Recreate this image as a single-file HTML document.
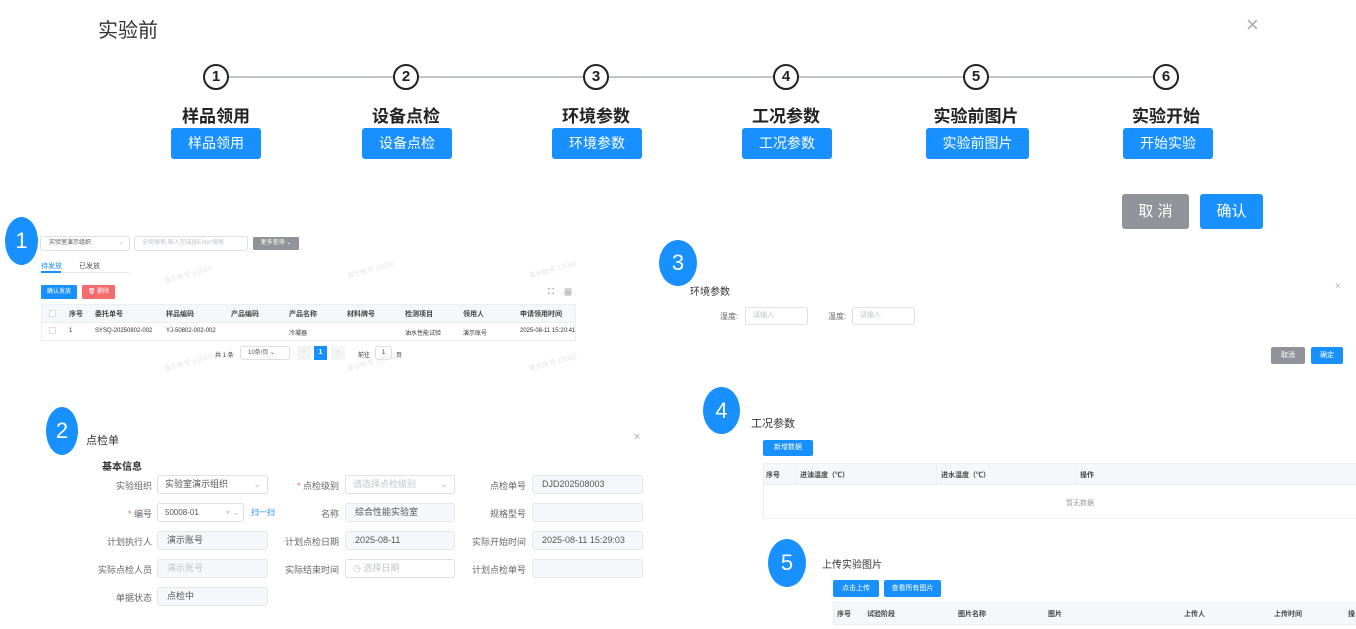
<!DOCTYPE html>
<html><head><meta charset="utf-8"><style>
*{margin:0;padding:0;box-sizing:border-box}
body{width:1356px;height:629px;position:relative;background:#fff;overflow:hidden;font-family:"Liberation Sans","Noto Sans CJK SC",sans-serif;color:#333}
.a{position:absolute;white-space:nowrap}
.st{width:26px;height:26px;border:2px solid #222;border-radius:50%;background:#fff;text-align:center;line-height:22px;font-size:15px;font-weight:bold;color:#222}
.lb{font-size:17px;font-weight:bold;color:#222;text-align:center;width:140px}
.bb{background:#1890ff;color:#fff;border-radius:3px;text-align:center;font-size:14px;height:31px;line-height:31px}
.num{background:#1890ff;color:#fff;border-radius:50%;width:34px;height:48px;text-align:center;line-height:48px;font-size:22px}
.in{border:1px solid #dcdfe6;border-radius:3px;background:#fff;font-size:9px;color:#c0c4cc;padding-left:7px;height:18px;line-height:16px}
.dis{background:#f5f7fa;border:1px solid #e4e7ed;border-radius:3px;height:19px;font-size:9px;line-height:17px;padding-left:9px;color:#555}
.fl{font-size:9px;color:#666;text-align:right}
.t{font-size:6px;color:#333}
.th{font-size:7px;font-weight:bold;color:#444}
.wm{font-size:7px;color:#e6e6e6;transform:rotate(-15deg)}
</style></head><body>
<div class="a" style="left:98px;top:14px;font-size:20px;color:#333">实验前</div>
<div class="a" style="left:1246px;top:12px;font-size:22px;color:#aaa;font-weight:300">×</div>
<div class="a" style="left:216px;top:76px;width:950px;height:2px;background:#c0c4cc"></div>
<div class="a st" style="left:203px;top:64px">1</div>
<div class="a st" style="left:393px;top:64px">2</div>
<div class="a st" style="left:583px;top:64px">3</div>
<div class="a st" style="left:773px;top:64px">4</div>
<div class="a st" style="left:963px;top:64px">5</div>
<div class="a st" style="left:1153px;top:64px">6</div>
<div class="a lb" style="left:146px;top:102px">样品领用</div>
<div class="a lb" style="left:336px;top:102px">设备点检</div>
<div class="a lb" style="left:526px;top:102px">环境参数</div>
<div class="a lb" style="left:716px;top:102px">工况参数</div>
<div class="a lb" style="left:906px;top:102px">实验前图片</div>
<div class="a lb" style="left:1096px;top:102px">实验开始</div>
<div class="a bb" style="left:171px;top:128px;width:90px">样品领用</div>
<div class="a bb" style="left:362px;top:128px;width:90px">设备点检</div>
<div class="a bb" style="left:552px;top:128px;width:90px">环境参数</div>
<div class="a bb" style="left:742px;top:128px;width:90px">工况参数</div>
<div class="a bb" style="left:926px;top:128px;width:103px">实验前图片</div>
<div class="a bb" style="left:1123px;top:128px;width:90px">开始实验</div>
<div class="a bb" style="left:1122px;top:194px;width:67px;height:35px;line-height:35px;background:#909399;font-size:15px">取 消</div>
<div class="a bb" style="left:1200px;top:194px;width:63px;height:35px;line-height:35px;font-size:15px">确认</div>

<!-- section 1 -->
<div class="a in" style="left:40px;top:236px;width:90px;height:15px;line-height:13px;font-size:6px;color:#555;padding-left:8px">实验室演示组织<span style="float:right;margin-right:5px;color:#bbb">⌄</span></div>
<div class="a in" style="left:134px;top:236px;width:114px;height:15px;line-height:13px;font-size:6px">全局搜索,输入完成按Enter搜索</div>
<div class="a" style="left:253px;top:237px;width:46px;height:13px;background:#909399;color:#fff;font-size:6px;line-height:13px;text-align:center;border-radius:1px">更多查询 ⌄</div>
<div class="num a" style="left:5px;top:217px;width:33px">1</div>
<div class="a" style="left:41px;top:261px;font-size:7px;color:#1890ff">待发放</div>
<div class="a" style="left:79px;top:261px;font-size:7px;color:#555">已发放</div>
<div class="a" style="left:41px;top:272px;width:88px;height:1px;background:#e4e7ed"></div>
<div class="a" style="left:41px;top:271px;width:20px;height:2px;background:#1890ff"></div>
<div class="a" style="left:41px;top:285px;width:36px;height:14px;background:#1890ff;color:#fff;font-size:6px;line-height:14px;text-align:center;border-radius:1px">确认发放</div>
<div class="a" style="left:82px;top:285px;width:33px;height:14px;background:#f56c6c;color:#fff;font-size:6px;line-height:14px;text-align:center;border-radius:1px">🗑 删除</div>
<div class="a" style="left:548px;top:287px;font-size:8px;color:#555">⛶</div>
<div class="a" style="left:564px;top:287px;font-size:8px;color:#555">▦</div>
<div class="a" style="left:41px;top:304px;width:535px;height:37px;border:1px solid #ebeef5"></div>
<div class="a" style="left:42px;top:305px;width:533px;height:17px;background:#f5f7fa"></div>
<div class="a" style="left:41px;top:322px;width:535px;height:1px;background:#ebeef5"></div>
<div class="a th" style="left:69px;top:309px">序号</div><div class="a th" style="left:95px;top:309px">委托单号</div><div class="a th" style="left:166px;top:309px">样品编码</div><div class="a th" style="left:231px;top:309px">产品编码</div><div class="a th" style="left:289px;top:309px">产品名称</div><div class="a th" style="left:347px;top:309px">材料牌号</div><div class="a th" style="left:405px;top:309px">检测项目</div><div class="a th" style="left:463px;top:309px">领用人</div><div class="a th" style="left:520px;top:309px">申请领用时间</div>
<div class="a t" style="left:69px;top:328px">1</div><div class="a t" style="left:95px;top:328px">SYSQ-20250802-002</div><div class="a t" style="left:166px;top:328px">YJ-50802-002-002</div><div class="a t" style="left:289px;top:328px">冷凝器</div><div class="a t" style="left:405px;top:328px">油水性能试验</div><div class="a t" style="left:463px;top:328px">演示账号</div><div class="a t" style="left:520px;top:328px">2025-08-11 15:20:41</div>
<div class="a" style="left:49px;top:327px;width:7px;height:7px;border:1px solid #ddd"></div>
<div class="a" style="left:49px;top:310px;width:7px;height:7px;border:1px solid #ddd;background:#fff"></div>
<div class="a t" style="left:215px;top:350px">共 1 条</div>
<div class="a in" style="left:240px;top:346px;width:50px;height:14px;font-size:6px;line-height:12px;color:#555">10条/页 ⌄</div>
<div class="a" style="left:297px;top:346px;width:14px;height:14px;background:#f4f4f5;color:#bbb;font-size:7px;text-align:center;line-height:14px">‹</div>
<div class="a" style="left:314px;top:346px;width:13px;height:14px;background:#1890ff;color:#fff;font-size:7px;text-align:center;line-height:14px;font-weight:bold">1</div>
<div class="a" style="left:331px;top:346px;width:14px;height:14px;background:#f4f4f5;color:#bbb;font-size:7px;text-align:center;line-height:14px">›</div>
<div class="a t" style="left:358px;top:350px">前往</div>
<div class="a in" style="left:375px;top:346px;width:17px;height:14px;font-size:6px;color:#333;line-height:12px;padding-left:6px">1</div>
<div class="a t" style="left:396px;top:350px">页</div>
<div class="a wm" style="left:163px;top:270px">演示账号 12090</div><div class="a wm" style="left:346px;top:265px">演示账号 12090</div><div class="a wm" style="left:528px;top:265px">演示账号 12090</div>
<div class="a wm" style="left:163px;top:358px">演示账号 12090</div><div class="a wm" style="left:346px;top:358px">演示账号 12090</div><div class="a wm" style="left:528px;top:358px">演示账号 12090</div>

<!-- section 2 -->
<div class="num a" style="left:46px;top:407px;width:32px">2</div>
<div class="a" style="left:86px;top:432px;font-size:11px;color:#333">点检单</div>
<div class="a" style="left:634px;top:431px;font-size:11px;color:#aaa">×</div>
<div class="a" style="left:102px;top:458px;font-size:10px;font-weight:bold;color:#333">基本信息</div>
<div class="a fl" style="left:90px;top:479px;width:62px">实验组织</div>
<div class="a in" style="left:157px;top:475px;width:111px;height:19px;color:#555;line-height:17px">实验室演示组织<span style="float:right;margin-right:6px;color:#bbb">⌄</span></div>
<div class="a fl" style="left:90px;top:507px;width:62px"><span style="color:#f56c6c">*</span> 编号</div>
<div class="a in" style="left:157px;top:503px;width:87px;height:19px;color:#555;line-height:17px;font-size:8px">50008-01<span style="float:right;margin-right:4px;color:#bbb">× ⌄</span></div>
<div class="a" style="left:251px;top:507px;font-size:8px;color:#1890ff">扫一扫</div>
<div class="a fl" style="left:90px;top:535px;width:62px">计划执行人</div>
<div class="a dis" style="left:157px;top:531px;width:111px">演示账号</div>
<div class="a fl" style="left:90px;top:563px;width:62px">实际点检人员</div>
<div class="a dis" style="left:157px;top:559px;width:111px;color:#c0c4cc">演示账号</div>
<div class="a fl" style="left:90px;top:591px;width:62px">单据状态</div>
<div class="a dis" style="left:157px;top:587px;width:111px">点检中</div>
<div class="a fl" style="left:270px;top:479px;width:69px"><span style="color:#f56c6c">*</span> 点检级别</div>
<div class="a in" style="left:345px;top:475px;width:110px;height:19px;line-height:17px">请选择点检级别<span style="float:right;margin-right:6px;color:#bbb">⌄</span></div>
<div class="a fl" style="left:270px;top:507px;width:69px">名称</div>
<div class="a dis" style="left:345px;top:503px;width:110px">综合性能实验室</div>
<div class="a fl" style="left:270px;top:535px;width:69px">计划点检日期</div>
<div class="a dis" style="left:345px;top:531px;width:110px">2025-08-11</div>
<div class="a fl" style="left:270px;top:563px;width:69px">实际结束时间</div>
<div class="a in" style="left:345px;top:559px;width:110px;height:19px;line-height:17px">◷ 选择日期</div>
<div class="a fl" style="left:460px;top:479px;width:66px">点检单号</div>
<div class="a dis" style="left:532px;top:475px;width:111px">DJD202508003</div>
<div class="a fl" style="left:460px;top:507px;width:66px">规格型号</div>
<div class="a dis" style="left:532px;top:503px;width:111px"></div>
<div class="a fl" style="left:460px;top:535px;width:66px">实际开始时间</div>
<div class="a dis" style="left:532px;top:531px;width:111px">2025-08-11 15:29:03</div>
<div class="a fl" style="left:460px;top:563px;width:66px">计划点检单号</div>
<div class="a dis" style="left:532px;top:559px;width:111px"></div>

<!-- section 3 -->
<div class="num a" style="left:659px;top:240px;width:38px;height:46px;line-height:46px">3</div>
<div class="a" style="left:690px;top:283px;font-size:10px;color:#333">环境参数</div>
<div class="a" style="left:1335px;top:281px;font-size:10px;color:#aaa">×</div>
<div class="a" style="left:720px;top:311px;font-size:8px;color:#666">湿度:</div>
<div class="a in" style="left:745px;top:307px;width:63px;font-size:7px">请输入</div>
<div class="a" style="left:828px;top:311px;font-size:8px;color:#666">温度:</div>
<div class="a in" style="left:852px;top:307px;width:63px;font-size:7px">请输入</div>
<div class="a" style="left:1271px;top:347px;width:34px;height:17px;background:#909399;color:#fff;font-size:7px;text-align:center;line-height:17px;border-radius:2px">取消</div>
<div class="a" style="left:1311px;top:347px;width:32px;height:17px;background:#1890ff;color:#fff;font-size:7px;text-align:center;line-height:17px;border-radius:2px">确定</div>

<!-- section 4 -->
<div class="num a" style="left:703px;top:387px;width:37px;height:47px;line-height:47px">4</div>
<div class="a" style="left:751px;top:415px;font-size:11px;color:#333">工况参数</div>
<div class="a" style="left:763px;top:440px;width:50px;height:16px;background:#1890ff;color:#fff;font-size:7px;text-align:center;line-height:16px;border-radius:2px">新增数据</div>
<div class="a" style="left:763px;top:463px;width:600px;height:56px;border:1px solid #ebeef5"></div>
<div class="a" style="left:764px;top:464px;width:600px;height:21px;background:#f5f7fa;border-bottom:1px solid #ebeef5"></div>
<div class="a" style="left:796px;top:464px;width:1px;height:21px;background:#ebeef5"></div>
<div class="a" style="left:936px;top:464px;width:1px;height:21px;background:#ebeef5"></div>
<div class="a" style="left:1075px;top:464px;width:1px;height:21px;background:#ebeef5"></div>
<div class="a th" style="left:766px;top:470px">序号</div>
<div class="a th" style="left:800px;top:470px">进油温度（℃）</div>
<div class="a th" style="left:941px;top:470px">进水温度（℃）</div>
<div class="a th" style="left:1080px;top:470px">操作</div>
<div class="a" style="left:1066px;top:498px;font-size:7px;color:#999">暂无数据</div>

<!-- section 5 -->
<div class="num a" style="left:768px;top:539px;width:38px;height:48px">5</div>
<div class="a" style="left:822px;top:556px;font-size:10px;color:#333">上传实验图片</div>
<div class="a" style="left:833px;top:580px;width:46px;height:17px;background:#1890ff;color:#fff;font-size:7px;text-align:center;line-height:17px;border-radius:2px">点击上传</div>
<div class="a" style="left:884px;top:580px;width:57px;height:17px;background:#1890ff;color:#fff;font-size:7px;text-align:center;line-height:17px;border-radius:2px">查看所有图片</div>
<div class="a" style="left:833px;top:602px;width:530px;height:23px;background:#f5f7fa;border:1px solid #ebeef5"></div>
<div class="a th" style="left:837px;top:609px">序号</div>
<div class="a th" style="left:867px;top:609px">试验阶段</div>
<div class="a th" style="left:958px;top:609px">图片名称</div>
<div class="a th" style="left:1048px;top:609px">图片</div>
<div class="a th" style="left:1184px;top:609px">上传人</div>
<div class="a th" style="left:1274px;top:609px">上传时间</div>
<div class="a th" style="left:1348px;top:609px">操</div>
</body></html>
